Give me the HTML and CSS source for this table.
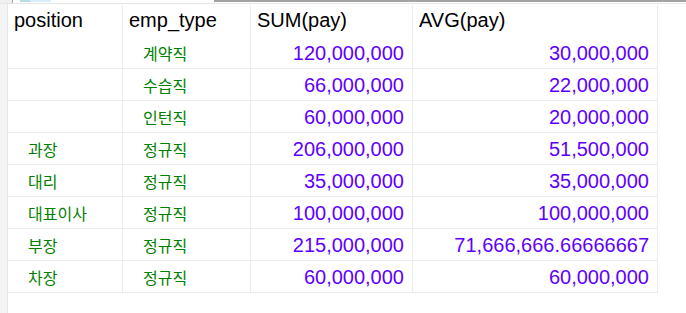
FILE: index.html
```html
<!DOCTYPE html>
<html lang="ko">
<head>
<meta charset="utf-8">
<title>Result grid</title>
<link rel="stylesheet" href="styles.css">
</head>
<body>
<div class="tabs">
  <div class="tab-corner"></div>
  <div class="tab-active"><span class="hl hl1"></span><span class="hl hl2"></span></div>
  <div class="tab-rest"></div>
</div>
<div class="main">
  <div class="side"></div>
  <div class="grid">
    <div class="hd">position</div>
    <div class="hd">emp_type</div>
    <div class="hd">SUM(pay)</div>
    <div class="hd">AVG(pay)</div>

    <div class="c txt"></div><div class="c txt">계약직</div><div class="c num">120,000,000</div><div class="c num">30,000,000</div>
    <div class="c txt"></div><div class="c txt">수습직</div><div class="c num">66,000,000</div><div class="c num">22,000,000</div>
    <div class="c txt"></div><div class="c txt">인턴직</div><div class="c num">60,000,000</div><div class="c num">20,000,000</div>
    <div class="c txt">과장</div><div class="c txt">정규직</div><div class="c num">206,000,000</div><div class="c num">51,500,000</div>
    <div class="c txt">대리</div><div class="c txt">정규직</div><div class="c num">35,000,000</div><div class="c num">35,000,000</div>
    <div class="c txt">대표이사</div><div class="c txt">정규직</div><div class="c num">100,000,000</div><div class="c num">100,000,000</div>
    <div class="c txt">부장</div><div class="c txt">정규직</div><div class="c num">215,000,000</div><div class="c num">71,666,666.66666667</div>
    <div class="c txt">차장</div><div class="c txt">정규직</div><div class="c num">60,000,000</div><div class="c num">60,000,000</div>
  </div>
</div>
</body>
</html>
```
FILE: styles.css
```css
html, body {
  margin: 0;
  padding: 0;
  background: #ffffff;
}
body {
  width: 686px;
  height: 313px;
  overflow: hidden;
  font-family: "Liberation Sans", Arial, sans-serif;
}
.tabs {
  display: flex;
  height: 3px;
  border-bottom: 1px solid #e6e6e6;
}
.tab-corner {
  width: 12px;
  background: #efefef;
  border-right: 1px solid #a8a8a8;
}
.tab-active {
  width: 201px;
  display: flex;
  align-items: flex-start;
  padding-left: 7px;
  box-sizing: border-box;
}
.hl {
  height: 2px;
  display: block;
}
.hl1 { width: 10px; background: #b2dde3; }
.hl2 { width: 21px; background: #d8ecf9; }
.tab-rest {
  flex: 1;
  height: 2px;
  margin-top: 0;
  background: #a3a3a3;
  border-left: 1px solid #a3a3a3;
}
.main {
  display: flex;
  height: 309px;
}
.side {
  width: 7px;
  background: #f4f4f4;
  border-right: 1px solid #e6e6e6;
}
.grid {
  display: grid;
  grid-template-columns: 115px 128px 162px 245px;
  grid-auto-rows: 32px;
  grid-template-rows: 33px;
  align-content: start;
}
.hd {
  box-sizing: border-box;
  border-right: 1px solid #ececec;
  margin-top: 1px;
  padding: 0 0 0 6px;
  font-size: 20px;
  line-height: 31px;
  color: #000000;
  white-space: nowrap;
}
.c {
  box-sizing: border-box;
  border-right: 1px solid #ececec;
  border-bottom: 1px solid #ececec;
  white-space: nowrap;
}
.txt {
  padding: 1px 0 0 20px;
  font-family: "Noto Sans CJK KR", "Liberation Sans", sans-serif;
  font-size: 16px;
  line-height: 30px;
  color: #008000;
}
.num {
  text-align: right;
  padding: 1px 8px 0 0;
  font-size: 20px;
  line-height: 30px;
  color: #6000ff;
}
```
